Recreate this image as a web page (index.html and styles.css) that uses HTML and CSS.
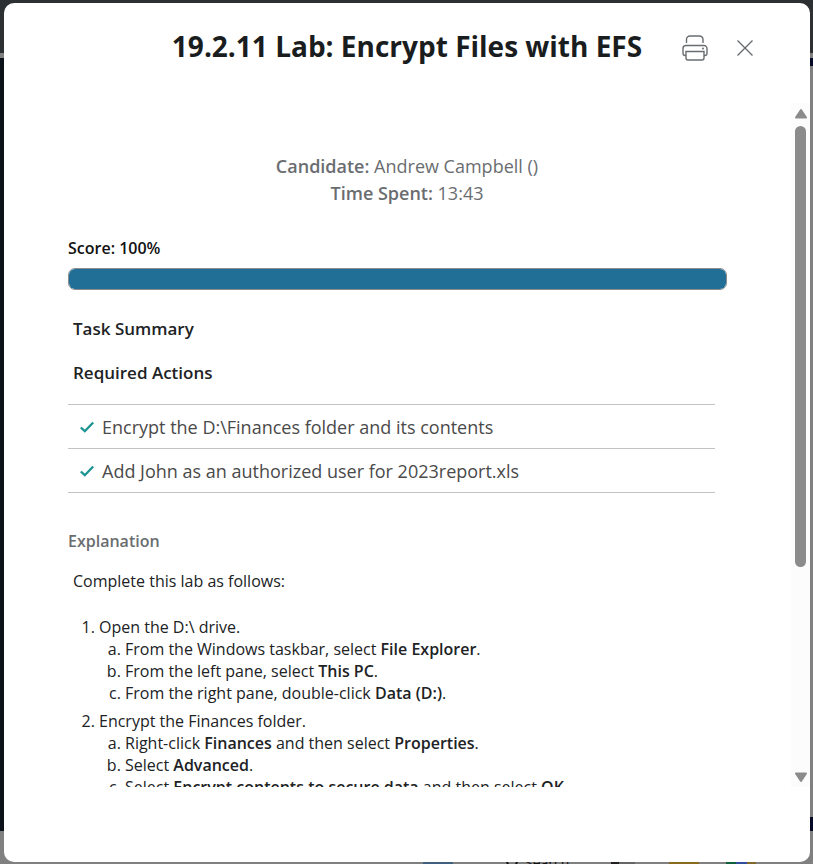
FILE: index.html
```html
<!DOCTYPE html>
<html lang="en">
<head>
<meta charset="utf-8">
<title>19.2.11 Lab: Encrypt Files with EFS</title>
<link rel="stylesheet" href="styles.css">
</head>
<body>
<div class="backdrop" aria-hidden="true">
  <div class="backdrop-top"></div>
  <div class="backdrop-rule"></div>
  <div class="backdrop-main"><div class="backdrop-panel"></div></div>
  <div class="taskbar">
    <span class="task-windows"></span>
    <span class="task-search"><svg width="16" height="16" viewBox="0 0 16 16" fill="none" stroke="currentColor" stroke-width="2"><circle cx="9" cy="6" r="5"/><path d="M5 10l-4 4"/></svg>Search</span>
    <span class="task-view"></span>
    <span class="task-folder"></span>
    <span class="task-browser"></span>
  </div>
</div>
<main class="dialog" role="dialog" aria-labelledby="title">
  <header class="dialog-header">
    <h1 id="title">19.2.11 Lab: Encrypt Files with EFS</h1>
    <div class="tools">
      <button type="button" aria-label="Print">
        <svg width="26" height="26" viewBox="0 0 26 26" fill="none" stroke="#6a6d70" stroke-width="1.4"><path d="M4.500 8V4.500a3.500 3.500 0 0 1 3.500-3.500h9.500a3.500 3.500 0 0 1 3.500 3.500V8"/><path d="M4 20.500H3.200A2.200 2.200 0 0 1 1 18.300v-4.800a3 3 0 0 1 3-3h18a3 3 0 0 1 3 3v4.800a2.200 2.200 0 0 1-2.200 2.200H22"/><path d="M4 16.500h18v6.500a2 2 0 0 1-2 2H6a2 2 0 0 1-2-2z"/><circle cx="21" cy="13.500" r="1" fill="#6a6d70" stroke="none"/></svg>
      </button>
      <button type="button" aria-label="Close">
        <svg width="18" height="18" viewBox="0 0 18 18" fill="none" stroke="#6a6d70" stroke-width="1.400"><path d="M1.500 1.500l15 15M16.500 1.500l-15 15"/></svg>
      </button>
    </div>
  </header>
  <div class="viewport">
    <div class="content">
      <div class="candidate">
        <p><strong>Candidate:</strong> Andrew Campbell ()</p>
        <p><strong>Time Spent:</strong> 13:43</p>
      </div>
      <div class="report">
        <p class="score" id="score">Score: 100%</p>
        <div class="progress" role="progressbar" aria-labelledby="score" aria-valuenow="100"><div class="progress-fill" style="width:100%"></div></div>
        <h2>Task Summary</h2>
        <h2>Required Actions</h2>
        <ul class="actions">
          <li><svg width="14" height="12" viewBox="0 0 14 12" fill="none" stroke="#1b9391" stroke-width="2.300"><path d="M.8 6.500l4 3.700L13.200 1.500"/></svg>Encrypt the D:\Finances folder and its contents</li>
          <li><svg width="14" height="12" viewBox="0 0 14 12" fill="none" stroke="#1b9391" stroke-width="2.300"><path d="M.8 6.500l4 3.700L13.200 1.500"/></svg>Add John as an authorized user for 2023report.xls</li>
        </ul>
        <h3>Explanation</h3>
        <p class="intro">Complete this lab as follows:</p>
        <ol class="steps">
          <li>Open the D:\ drive.
            <ol>
              <li>From the Windows taskbar, select <b>File Explorer</b>.</li>
              <li>From the left pane, select <b>This PC</b>.</li>
              <li>From the right pane, double-click <b>Data (D:)</b>.</li>
            </ol>
          </li>
          <li>Encrypt the Finances folder.
            <ol>
              <li>Right-click <b>Finances</b> and then select <b>Properties</b>.</li>
              <li>Select <b>Advanced</b>.</li>
              <li>Select <b>Encrypt contents to secure data</b> and then select <b>OK</b>.</li>
            </ol>
          </li>
        </ol>
      </div>
    </div>
    <div class="scrollbar" aria-hidden="true">
      <svg width="14" height="11" viewBox="0 0 14 11"><path d="M7 2L12 9.500H2z" fill="#8b8b8b" stroke="#8b8b8b" stroke-width="2" stroke-linejoin="round"/></svg>
      <div class="lane"><div class="thumb"></div></div>
      <svg width="14" height="11" viewBox="0 0 14 11"><path d="M7 9L12 1.500H2z" fill="#8b8b8b" stroke="#8b8b8b" stroke-width="2" stroke-linejoin="round"/></svg>
    </div>
  </div>
</main>
</body>
</html>
```
FILE: styles.css
```css
* { box-sizing: border-box; }

body {
  margin: 0;
  height: 100vh;
  padding: 3px 3px 2px 4px;
  overflow: hidden;
  font-family: "Open Sans", "Noto Sans", sans-serif;
  font-size: 16px;
  line-height: 22px;
  color: #202224;
}

h1, h2, h3, p, ul, ol { margin: 0; padding: 0; }

/* Dimmed page behind the dialog */
.backdrop {
  position: absolute;
  inset: 0;
  display: flex;
  flex-direction: column;
  overflow: hidden;
  background: #808080;
}
.backdrop-top { height: 53px; background: #2c3033; }
.backdrop-rule { height: 5px; background: #808080; }
.backdrop-main { flex: 1; padding: 8px 0 14px; background: linear-gradient(90deg, #0c121a 50%, #070a26 50%); }
.backdrop-panel { height: 100%; margin-left: 50%; background: #808080; }
.taskbar {
  display: flex;
  align-items: flex-end;
  height: 33px;
  padding-left: 423px;
  background: #808080;
}
.taskbar span { flex: none; height: 2px; }
.task-windows { width: 30px; background: #3f5f7c; }
.taskbar .task-search {
  display: flex;
  gap: 6px;
  height: 9px;
  width: 108px;
  margin-left: 50px;
  font-size: 14px;
  line-height: 16px;
  color: #111;
}
.task-view { width: 24px; background: linear-gradient(90deg, #221d20 33%, #666 33%); }
.task-folder { width: 30px; margin-left: 34px; background: #8a6a1c; }
.task-browser { width: 30px; margin-left: 27px; background: linear-gradient(90deg, #11603c 33%, #2f4f9c 33% 70%, #80682a 70%); }

.dialog {
  position: relative;
  display: flex;
  flex-direction: column;
  height: 100%;
  padding-bottom: 75px;
  border-radius: 10px;
  background: #fff;
}
.dialog-header {
  display: grid;
  grid-template-columns: 1fr auto 1fr;
  align-items: center;
  height: 100px;
  padding-bottom: 14px;
}
h1 { grid-column: 2; font-size: 28px; line-height: 38px; font-weight: 700; color: #1a1d20; }
.tools { display: flex; align-items: center; gap: 28px; padding: 4px 0 0 40px; }
.tools button { display: flex; padding: 0; border: 0; background: none; }

.viewport { position: relative; flex: 1; min-height: 0; overflow: hidden; }
.content { padding-top: 50px; }
.candidate { text-align: center; font-size: 18px; line-height: 27px; color: #6a6d70; }
.candidate strong { font-weight: 600; }
.report { padding: 30px 83px 0 64px; }
.score { font-weight: 600; color: #111; }
.progress {
  height: 22px;
  margin-top: 9px;
  border: 1px solid #8c8c8c;
  border-radius: 7px;
  overflow: hidden;
}
.progress-fill { height: 100%; background: #216f97; }
h2 { margin: 28px 5px 0; font-size: 17px; line-height: 22px; font-weight: 600; }
h2 + h2 { margin-top: 22px; }
.actions { list-style: none; margin: 20px 12px 0 0; border-top: 1px solid #c3c3c3; font-size: 18px; color: #4a4a4a; }
.actions li { display: flex; align-items: center; gap: 8px; height: 44px; padding-left: 12px; border-bottom: 1px solid #c3c3c3; }
h3 { margin-top: 37px; font-size: 16px; line-height: 22px; font-weight: 600; color: #6a6d70; }
.intro { margin: 18px 5px 24px; }
.steps { padding-left: 31px; }
.steps > li { margin-bottom: 6px; }
.steps ol { padding-left: 26px; list-style: lower-alpha; }
.steps b { font-weight: 600; }

.scrollbar {
  position: absolute;
  inset: 0 0 0 auto;
  display: flex;
  flex-direction: column;
  align-items: center;
  width: 19px;
  padding: 5px 0 4px;
  background: #fcfcfc;
}
.lane { flex: 1; width: 11px; margin: 7px 0; }
.thumb { height: 69%; border-radius: 6px; background: #8b8b8b; }
```
